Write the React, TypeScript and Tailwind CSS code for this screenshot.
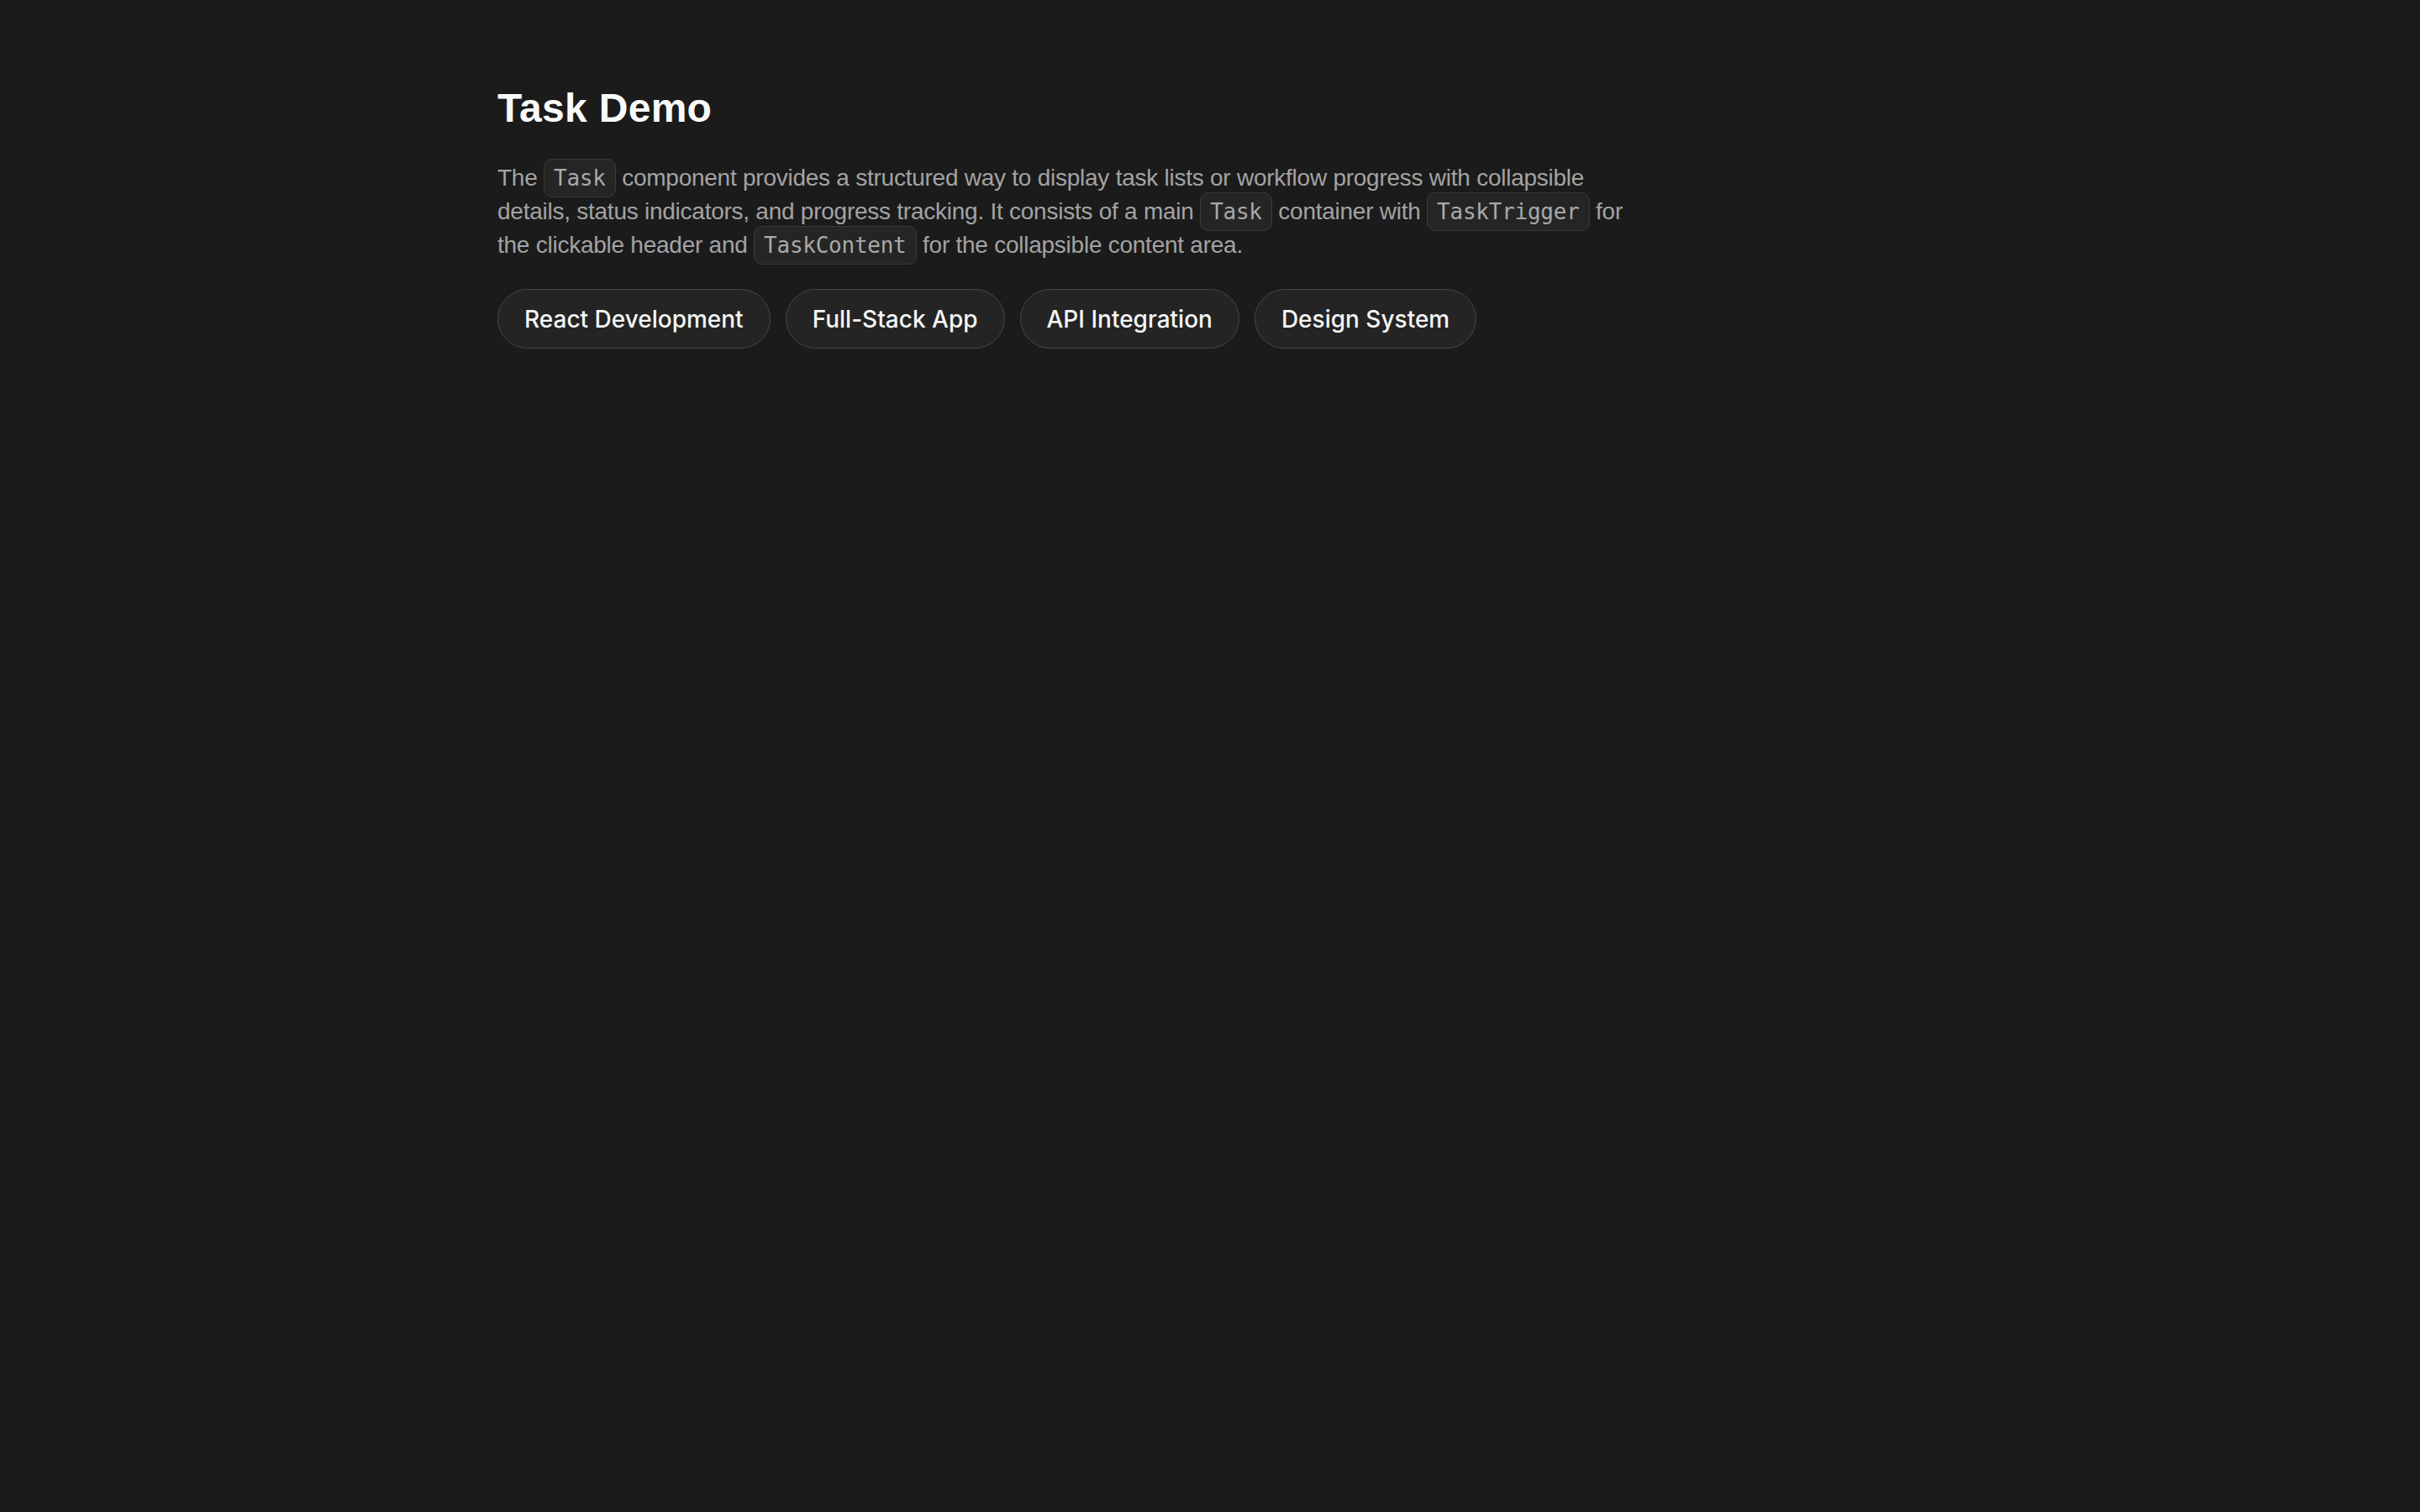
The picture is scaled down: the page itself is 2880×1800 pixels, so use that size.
import React from "react";

function Code({ children }: { children: React.ReactNode }) {
  return (
    <code className="rounded-[10px] border border-[#3a3a3a] bg-[#252525] px-[11px] py-[7px] font-['DejaVu_Sans_Mono',monospace] text-[26px] leading-none text-[#a9a9a9]">
      {children}
    </code>
  );
}

const buttons = ["React Development", "Full-Stack App", "API Integration", "Design System"];

export default function App() {
  return (
    <div className="min-h-screen bg-[#1b1b1b] pl-[592px] pt-[97px]">
      <div className="w-[1370px]">
        <h1 className="font-['Liberation_Sans',Arial,sans-serif] text-[48px] font-bold leading-[64px] tracking-[0.3px] text-[#fafafa]">
          Task Demo
        </h1>
        <p className="mt-[31px] font-['Liberation_Sans',Arial,sans-serif] text-[28px] leading-[40px] tracking-[-0.25px] text-[#a3a3a3]">
          The <Code>Task</Code> component provides a structured way to display task lists or workflow progress with
          collapsible details, status indicators, and progress tracking. It consists of a main <Code>Task</Code>{" "}
          container with <Code>TaskTrigger</Code> for the clickable header and <Code>TaskContent</Code> for the
          collapsible content area.
        </p>
        <div className="mt-[32px] flex gap-[18px]">
          {buttons.map((b) => (
            <button
              key={b}
              className="flex h-[71px] items-center rounded-full border border-[#464646] bg-[#242424] px-[31px] font-['Inter',sans-serif] text-[28px] font-medium text-[#f5f5f5]"
            >
              {b}
            </button>
          ))}
        </div>
      </div>
    </div>
  );
}
